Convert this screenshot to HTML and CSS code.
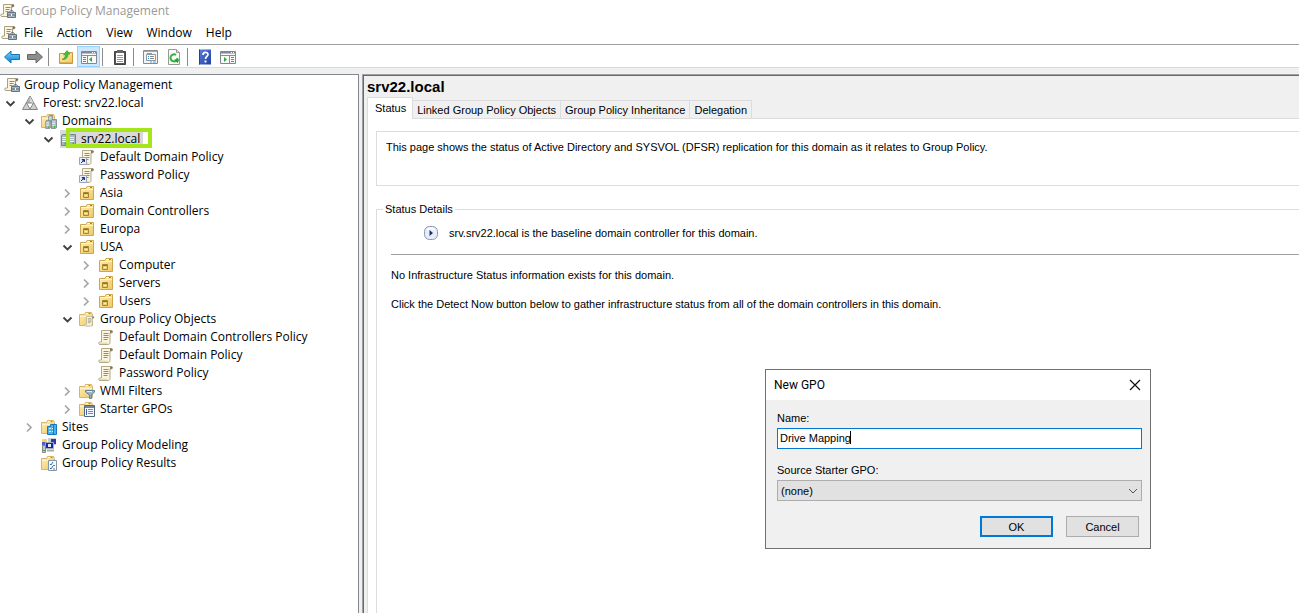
FILE: index.html
```html
<!DOCTYPE html>
<html lang="en">
<head>
<meta charset="utf-8">
<title>Group Policy Management</title>
<link rel="stylesheet" href="styles.css">
</head>
<body>
<svg class="sprite" aria-hidden="true">
  <defs>
    <linearGradient id="gold" x1="0" y1="0" x2="1" y2="1"><stop offset="0" stop-color="#fff0b4"/><stop offset="1" stop-color="#efc764"/></linearGradient>
    <linearGradient id="blue" x1="0" y1="0" x2="0" y2="1"><stop offset="0" stop-color="#7fd4fb"/><stop offset="1" stop-color="#087fcf"/></linearGradient>
    <linearGradient id="help" x1="0" y1="0" x2="1" y2="1"><stop offset="0" stop-color="#5c80dd"/><stop offset="1" stop-color="#1f3fa4"/></linearGradient>
  </defs>
  <symbol id="scroll" viewBox="0 0 16 16">
    <path d="M3.500 1.500h10c1.500 0 1.500 2.500 0 2.500h-1.500v9.500c0 1.200-.8 2-2 2H2c-1.800 0-1.800-2.500 0-2.500h1.500z" fill="#fbf5df" stroke="#b3a987"/>
    <path d="M12 4V2.500c0-1.300 2.500-1.300 2.500 0S13 4 12 4z" fill="#847452"/>
    <path d="M2 13.500h7.500v1.500H2z" fill="#e8dcb4"/>
    <path d="M5.500 4.500h5M5.500 6.500h5M5.500 8.500h5M5.500 10.500h4" stroke="#8c8c88"/>
  </symbol>
  <symbol id="gpm" viewBox="0 0 16 16">
    <path d="M3.500 1.500h9c2 0 2 2.500 0 2.500h-1v9.500H2c-1.800 0-1.800-2.500 0-2.500h1.500z" fill="#fbf5df" stroke="#aaa084"/>
    <path d="M11.500 4V2.500c0-1.300 2.500-1.300 2.500 0S12.500 4 11.500 4z" fill="#7b6c4d"/>
    <path d="M5.500 4.500h5M5.500 6.500h4M5.500 8.500h3" stroke="#8c8c88"/>
    <path d="M9.500 10c0-3.500 4-3.500 4 0" fill="none" stroke="#59636d"/>
    <path d="M7.500 9.500h8v5h-8z" fill="#a9bac6" stroke="#63737f"/>
    <path d="M8 12h7" stroke="#566672"/><path d="M11 11h1v2h-1z" fill="#fff"/>
  </symbol>
  <symbol id="shortcut" viewBox="0 0 16 16">
    <use href="#scroll" width="16" height="16"/>
    <path d="M.5 8.500h7v7h-7z" fill="#e9edf8" stroke="#9aa4c8"/>
    <path d="M2 14l3-3M3 10.500h2.500V13z" stroke="#27327c" fill="#27327c"/>
  </symbol>
  <symbol id="folder" viewBox="0 0 16 16">
    <path d="M.5 3.500h5l1-2h6l1 2v11H.5z" fill="url(#gold)" stroke="#d8b566"/>
    <path d="M7 2.500h5" stroke="#fff"/><path d="M9.500 2.500h2" stroke="#4b90d0"/><path d="M1 5.500h12" stroke="#fff4cb"/>
  </symbol>
  <symbol id="ou" viewBox="0 0 16 16">
    <path d="M1.500 3.500h5.500l1-2h6.500v13h-13z" fill="url(#gold)" stroke="#cda650"/>
    <path d="M8.500 2.500h5" stroke="#fff"/><path d="M11 2.500h2" stroke="#3f8fd8"/>
    <path d="M2 4.500h12" stroke="#fff4cb"/>
    <path d="M4.500 7.500h5v5h-5z" fill="#e9cf75" stroke="#a58634"/><path d="M5 8.500h4" stroke="#8a7230"/><path d="M6 10.500h2" stroke="#fff3b8"/>
  </symbol>
  <symbol id="forest" viewBox="0 0 16 16">
    <path d="M8 1L15.500 14.500H.5z" fill="#cfcfcf" stroke="#858585"/>
    <path d="M8 1.500L4.500 8h7z" fill="#b4b4b4"/><path d="M4.500 8h7L8 14z" fill="#fff" stroke="#858585"/>
    <path d="M8 2l3.500 6L8 7z" fill="#dcdcdc"/>
  </symbol>
  <symbol id="tower" viewBox="0 0 7 12">
    <path d="M.5 1.500l1-1h5v10l-1 1h-5z" fill="#a7b6be" stroke="#74858f"/>
    <path d="M1 3.500h4M1 5.500h4M1 7.500h4" stroke="#e9f1f4"/><path d="M3.500 8.500h1.500v2H3.500z" fill="#35b44a"/>
  </symbol>
  <symbol id="domains" viewBox="0 0 16 16">
    <use href="#folder" width="16" height="16"/>
    <use href="#tower" x="7" y="2" width="5" height="8"/><use href="#tower" x="4" y="7" width="6" height="9"/><use href="#tower" x="10" y="6" width="6" height="10"/>
  </symbol>
  <symbol id="domain" viewBox="0 0 16 16">
    <use href="#tower" x="1" y="3" width="7" height="12"/><use href="#tower" x="9" y="3" width="7" height="12"/>
  </symbol>
  <symbol id="gpos" viewBox="0 0 16 16">
    <use href="#folder" width="16" height="16"/><use href="#scroll" x="5" y="4" width="11" height="12"/>
  </symbol>
  <symbol id="wmi" viewBox="0 0 16 16">
    <use href="#folder" width="16" height="16"/>
    <path d="M6.500 7.500h9v1.500L12.500 12v3.500h-2V12l-4-3z" fill="#9bb3c6" stroke="#65829a"/><path d="M8 8.500h5" stroke="#e0edf5"/>
  </symbol>
  <symbol id="starter" viewBox="0 0 16 16">
    <use href="#folder" width="16" height="16"/>
    <path d="M5.500 4.500h10v11h-10z" fill="#f5f8fc" stroke="#56667b"/><path d="M6 5h9v2H6z" fill="#7184a2"/>
    <path d="M9 8.500h5M9 10.500h5M9 12.500h5" stroke="#6b8fc0"/><path d="M7.500 8v6" stroke="#3768a8"/>
  </symbol>
  <symbol id="sites" viewBox="0 0 16 16">
    <use href="#folder" width="16" height="16"/>
    <path d="M6.500 7.500h3v-2h6v10h-9z" fill="#4ab1ed" stroke="#1978bd"/>
    <path d="M8 9.500h6M8 12.500h6" stroke="#dff4ff" stroke-dasharray="2 1"/><path d="M12.500 6v9" stroke="#1978bd"/>
  </symbol>
  <symbol id="modeling" viewBox="0 0 16 16">
    <path d="M1 2h5v5H1z" fill="#f5d46e"/><path d="M7 1h8v7H7z" fill="#c9ced5"/><path d="M10 2h5v5h-5z" fill="#303aab"/>
    <path d="M1 5h6v5H1z" fill="#5360b8"/><path d="M4.500 5.500h8v6h-8z" fill="#1727b7" stroke="#a9adb8"/>
    <path d="M7 7h3v3H7z" fill="#e5ebff"/><path d="M1.500 8.500h3v7h-3z" fill="#c3c5c9" stroke="#888"/><path d="M6 13.500h7" stroke="#aaa" stroke-width="2"/><path d="M2 13h2v1H2z" fill="#3cae45"/>
  </symbol>
  <symbol id="results" viewBox="0 0 16 16">
    <use href="#folder" width="16" height="16"/>
    <path d="M7.500 5.500h8v10h-8z" fill="#f4f8fb" stroke="#8793a0"/><path d="M9 9l1 1 2-3M9 13l1 1 2-3" fill="none" stroke="#2871b8"/><path d="M12 10.500h2M12 14h2" stroke="#777"/>
  </symbol>
  <symbol id="open" viewBox="0 0 16 16"><path d="M6 4.500L10 8.500 6 12.500" fill="none" stroke="#a6a6a6" stroke-width="1.700"/></symbol>
  <symbol id="close" viewBox="0 0 16 16"><path d="M4.500 6.500l4 4 4-4" fill="none" stroke="#404040" stroke-width="1.800"/></symbol>
</svg>

<header>
  <div class="titlebar"><svg class="icon"><use href="#gpm"/></svg><span>Group Policy Management</span></div>
  <nav class="menubar">
    <svg class="icon"><use href="#gpm"/></svg>
    <button>File</button><button>Action</button><button>View</button><button>Window</button><button>Help</button>
  </nav>
  <div class="toolbar">
    <button aria-label="Back"><svg class="icon" viewBox="0 0 16 16"><path d="M.5 8L7 2v3.500h8.500v5H7V14z" fill="url(#blue)" stroke="#1775b3"/></svg></button>
    <button aria-label="Forward"><svg class="icon" viewBox="0 0 16 16"><path d="M15.500 8L9 2v3.500H.5v5H9V14z" fill="#8d8d8d" stroke="#666"/></svg></button>
    <i class="sep"></i>
    <button aria-label="Up one level"><svg class="icon" viewBox="0 0 16 16"><path d="M1.500 4.500h5l1-1h7v11h-13z" fill="url(#gold)" stroke="#c59b42"/><path d="M2 13.500h12" stroke="#ddb150"/><path d="M4 10.500c2.500-1 3.500-3 3.500-5L5.500 6 9 1.500 12 5l-2 .3c0 4-3 5.700-6 5.200z" fill="#44be33" stroke="#2c8d24" stroke-width=".5"/></svg></button>
    <button class="on" aria-label="Show console tree" aria-pressed="true"><svg class="icon" viewBox="0 0 16 16"><path d="M.5 2.500h15v12H.5z" fill="#fafafa" stroke="#808894"/><path d="M1 3.500h14" stroke="#808894" stroke-width="2"/><path d="M11 3.500h3" stroke="#fff" stroke-dasharray="1 1"/><path d="M1 6.500h14M6.500 6v8" stroke="#858d98"/><path d="M2 8.500h3M2 10.500h3M2 12.500h3" stroke="#4b86c5"/><path d="M11 8v5L8 10.500z" fill="#2eaa3c"/></svg></button>
    <i class="sep"></i>
    <button aria-label="Clipboard"><svg class="icon" viewBox="0 0 16 16"><path d="M2.500 2.500h11v13h-11z" fill="#555" stroke="#444"/><path d="M4 4h8v10H4z" fill="#fff"/><path d="M5 1h6v3H5z" fill="#666"/><path d="M5 6.500h6M5 8.500h6M5 10.500h6M5 12.500h6" stroke="#999"/></svg></button>
    <i class="sep"></i>
    <button aria-label="Properties"><svg class="icon" viewBox="0 0 16 16"><path d="M.5 1.500h14v13H.5z" fill="#f4f4f4" stroke="#8a8a8a"/><path d="M1 2.500h13" stroke="#aaa"/><path d="M3.500 5.500h9v6h-9z" fill="#fff" stroke="#8d99a5"/><path d="M4 4.500h5" stroke="#8d99a5"/><path d="M5 7.500h1M5 9.500h1" stroke="#2d8dd8"/><path d="M7 7.500h4M7 9.500h4" stroke="#888"/><path d="M7 13h2M10 13h3" stroke="#55a5db"/></svg></button>
    <button aria-label="Refresh"><svg class="icon" viewBox="0 0 16 16"><path d="M2.500 .5h8l3 3v12h-11z" fill="#fafafa" stroke="#999"/><path d="M10.500 .5v3h3" fill="#ddd" stroke="#999"/><path d="M11.500 9a3.500 3.500 0 1 1-1.500-3" fill="none" stroke="#35b43c" stroke-width="2"/><path d="M8 10.500h5.500L11.500 14z" fill="#279d30"/></svg></button>
    <i class="sep"></i>
    <button aria-label="Help"><svg class="icon" viewBox="0 0 16 16"><path d="M2 .5h12v15H2z" fill="url(#help)"/><path d="M2.500 .5v15" stroke="#263f8e"/><path d="M6 6c0-3.500 5-3.500 5-.5 0 2-2.500 2-2.500 4.500" fill="none" stroke="#fff" stroke-width="1.700"/><path d="M7.500 11.500h2v2h-2z" fill="#fff"/></svg></button>
    <button aria-label="Show action pane"><svg class="icon" viewBox="0 0 16 16"><path d="M.5 2.500h15v12H.5z" fill="#fafafa" stroke="#808894"/><path d="M1 3.500h14" stroke="#808894" stroke-width="2"/><path d="M11 3.500h3" stroke="#fff" stroke-dasharray="1 1"/><path d="M1 6.500h14M9.500 6v8" stroke="#858d98"/><path d="M11 8.500h3M11 10.500h3M11 12.500h3" stroke="#4b86c5"/><path d="M4 8v5l3-2.500z" fill="#2eaa3c"/></svg></button>
  </div>
</header>

<main class="workspace">
  <nav class="tree" aria-label="Console tree">
    <div class="row root"><svg class="icon"><use href="#gpm"/></svg><span>Group Policy Management</span></div>
    <ul>
      <li>
        <div class="row"><button aria-label="Collapse"><svg class="icon"><use href="#close"/></svg></button><svg class="icon"><use href="#forest"/></svg><span>Forest: srv22.local</span></div>
        <ul>
          <li>
            <div class="row"><button aria-label="Collapse"><svg class="icon"><use href="#close"/></svg></button><svg class="icon"><use href="#domains"/></svg><span>Domains</span></div>
            <ul>
              <li>
                <div class="row selected"><button aria-label="Collapse"><svg class="icon"><use href="#close"/></svg></button><svg class="icon"><use href="#domain"/></svg><span>srv22.local</span><i class="marker"></i></div>
                <ul>
                  <li><div class="row leaf"><svg class="icon"><use href="#shortcut"/></svg><span>Default Domain Policy</span></div></li>
                  <li><div class="row leaf"><svg class="icon"><use href="#shortcut"/></svg><span>Password Policy</span></div></li>
                  <li><div class="row"><button aria-label="Expand"><svg class="icon"><use href="#open"/></svg></button><svg class="icon"><use href="#ou"/></svg><span>Asia</span></div></li>
                  <li><div class="row"><button aria-label="Expand"><svg class="icon"><use href="#open"/></svg></button><svg class="icon"><use href="#ou"/></svg><span>Domain Controllers</span></div></li>
                  <li><div class="row"><button aria-label="Expand"><svg class="icon"><use href="#open"/></svg></button><svg class="icon"><use href="#ou"/></svg><span>Europa</span></div></li>
                  <li>
                    <div class="row"><button aria-label="Collapse"><svg class="icon"><use href="#close"/></svg></button><svg class="icon"><use href="#ou"/></svg><span>USA</span></div>
                    <ul>
                      <li><div class="row"><button aria-label="Expand"><svg class="icon"><use href="#open"/></svg></button><svg class="icon"><use href="#ou"/></svg><span>Computer</span></div></li>
                      <li><div class="row"><button aria-label="Expand"><svg class="icon"><use href="#open"/></svg></button><svg class="icon"><use href="#ou"/></svg><span>Servers</span></div></li>
                      <li><div class="row"><button aria-label="Expand"><svg class="icon"><use href="#open"/></svg></button><svg class="icon"><use href="#ou"/></svg><span>Users</span></div></li>
                    </ul>
                  </li>
                  <li>
                    <div class="row"><button aria-label="Collapse"><svg class="icon"><use href="#close"/></svg></button><svg class="icon"><use href="#gpos"/></svg><span>Group Policy Objects</span></div>
                    <ul>
                      <li><div class="row leaf"><svg class="icon"><use href="#scroll"/></svg><span>Default Domain Controllers Policy</span></div></li>
                      <li><div class="row leaf"><svg class="icon"><use href="#scroll"/></svg><span>Default Domain Policy</span></div></li>
                      <li><div class="row leaf"><svg class="icon"><use href="#scroll"/></svg><span>Password Policy</span></div></li>
                    </ul>
                  </li>
                  <li><div class="row"><button aria-label="Expand"><svg class="icon"><use href="#open"/></svg></button><svg class="icon"><use href="#wmi"/></svg><span>WMI Filters</span></div></li>
                  <li><div class="row"><button aria-label="Expand"><svg class="icon"><use href="#open"/></svg></button><svg class="icon"><use href="#starter"/></svg><span>Starter GPOs</span></div></li>
                </ul>
              </li>
            </ul>
          </li>
          <li><div class="row"><button aria-label="Expand"><svg class="icon"><use href="#open"/></svg></button><svg class="icon"><use href="#sites"/></svg><span>Sites</span></div></li>
          <li><div class="row leaf"><svg class="icon"><use href="#modeling"/></svg><span>Group Policy Modeling</span></div></li>
          <li><div class="row leaf"><svg class="icon"><use href="#results"/></svg><span>Group Policy Results</span></div></li>
        </ul>
      </li>
    </ul>
  </nav>

  <section class="details">
    <h1>srv22.local</h1>
    <div class="tabs" role="tablist">
      <button role="tab" class="active" aria-selected="true">Status</button><button role="tab">Linked Group Policy Objects</button><button role="tab">Group Policy Inheritance</button><button role="tab">Delegation</button>
    </div>
    <div class="page">
      <p class="intro">This page shows the status of Active Directory and SYSVOL (DFSR) replication for this domain as it relates to Group Policy.</p>
      <fieldset>
        <legend>Status Details</legend>
        <div class="baseline">
          <svg class="icon" viewBox="0 0 16 16"><rect x="1.500" y="1.500" width="13" height="13" rx="5" fill="#e6edf8" stroke="#8b97b8"/><path d="M4 5c2-2 6-2 8 0" stroke="#fff" fill="none" stroke-width="2"/><path d="M6.500 5v6L10 8z" fill="#1c2f72"/></svg>
          <span>srv.srv22.local is the baseline domain controller for this domain.</span>
        </div>
        <hr>
        <p>No Infrastructure Status information exists for this domain.</p>
        <p>Click the Detect Now button below to gather infrastructure status from all of the domain controllers in this domain.</p>
      </fieldset>
    </div>
  </section>
</main>

<form class="dialog" role="dialog" aria-labelledby="dialog-title">
  <div class="dialog-head"><span id="dialog-title">New GPO</span>
    <button type="button" aria-label="Close"><svg class="icon" viewBox="0 0 16 16"><path d="M3 3l10 10M13 3L3 13" stroke="#111" stroke-width="1.200"/></svg></button></div>
  <div class="dialog-body">
    <label for="name">Name:</label>
    <div class="field"><input id="name" type="text" value="Drive Mapping"><i class="caret"></i></div>
    <label for="source">Source Starter GPO:</label>
    <div class="field"><select id="source"><option>(none)</option></select><svg class="arrow" viewBox="0 0 10 6"><path d="M1 1l4 4 4-4" fill="none" stroke="#555"/></svg></div>
    <div class="actions"><button type="button" class="default">OK</button><button type="button">Cancel</button></div>
  </div>
</form>
</body>
</html>
```
FILE: styles.css
```css
* { box-sizing: border-box; }

body {
  margin: 0;
  min-height: 100vh;
  display: flex;
  flex-direction: column;
  position: relative;
  overflow: hidden;
  background: #f0f0f0;
  color: #000;
  font: 12px/18px "Open Sans", "Noto Sans", sans-serif;
}

button { font: inherit; color: inherit; padding: 0; border: 0; background: none; }
ul { list-style: none; margin: 0; padding: 0; }
.sprite { position: absolute; width: 0; height: 0; }
.icon { display: block; flex: none; width: 16px; height: 16px; }

.titlebar, .menubar { display: flex; align-items: center; height: 22px; background: #fff; }
.titlebar { gap: 5px; color: #999; }
.menubar { padding-left: 1px; }
.menubar button { padding: 0 7px; line-height: 22px; }

.toolbar {
  display: flex;
  align-items: center;
  height: 24px;
  padding-top: 1px;
  background: #fff;
  border-top: 1px solid #a0a0a0;
  border-bottom: 1px solid #d9d9d9;
}
.toolbar button { width: 23px; height: 21px; display: grid; place-items: center; }
.toolbar .on { background: #cce8ff; border: 1px solid #99d1ff; }
.sep { width: 1px; height: 18px; margin: 0 5px 0 2px; background: #8a8a8a; }

.workspace { flex: 1; display: flex; gap: 3px; padding-top: 6px; }
.tree {
  flex: 0 0 359px;
  padding-top: 1px;
  background: #fff;
  border-top: 1px solid #828790;
  border-right: 1px solid #828790;
  white-space: nowrap;
}
.tree ul ul { padding-left: 19px; }
.row { display: flex; align-items: center; gap: 4px; height: 18px; padding-left: 2px; position: relative; }
.row button { width: 16px; height: 16px; }
.row span { padding-left: 1px; }
.root { padding-left: 4px; }
.root span { padding-left: 0; }
.leaf { padding-left: 22px; }
.selected span { background: #d9d9d9; margin-left: -4px; padding: 0 3px 0 5px; }
.selected > .icon { height: 18px; padding: 1px 0; background: #d9d9d9; }
.marker { position: absolute; left: 28px; top: -2px; width: 86px; height: 20px; border: 4px solid #a5e61b; }

.details {
  flex: 1;
  min-width: 0;
  display: flex;
  flex-direction: column;
  padding-left: 3px;
  border: solid #696969;
  border-width: 1px 0 0 1px;
  outline: 1px solid #a0a0a0;
  margin: 1px 0 0 1px;
  font: 11px/16px "Liberation Sans", Arial, sans-serif;
}
h1 { margin: 0; font-size: 15px; line-height: 22px; }
.tabs { position: relative; display: flex; align-items: flex-end; height: 20px; }
.tabs button { height: 18px; padding: 0 4px; border: 1px solid #dcdcdc; border-left: 0; border-bottom: 0; }
.tabs .active { height: 22px; margin-bottom: -1px; padding: 0 6px 2px 7px; border-left: 1px solid #dcdcdc; background: #fff; }
.page { flex: 1; padding: 12px 0 0 8px; background: #fff; border: 1px solid #dcdcdc; border-width: 1px 0 0 1px; }
.intro { height: 55px; margin: 0; padding: 7px 9px; border: 1px solid #dcdcdc; border-right: 0; }
fieldset { margin: 15px 0 0; min-height: 420px; padding: 8px 0 0 14px; border: 1px solid #dcdcdc; border-right: 0; }
legend { margin-left: -8px; padding: 0 2px; }
.baseline { display: flex; align-items: center; gap: 10px; padding-left: 32px; }
hr { height: 1px; margin: 13px 0 12px; border: 0; background: #a0a0a0; }
fieldset p { margin: 0 0 13px; }

.dialog {
  position: absolute;
  left: 765px;
  top: 369px;
  width: 386px;
  background: #f0f0f0;
  border: 1px solid #707070;
  font: 11px/16px "Liberation Sans", Arial, sans-serif;
}
.dialog-head { display: flex; align-items: center; justify-content: space-between; height: 30px; padding: 0 7px 0 8px; background: #fff; font: 12px/18px Roboto, sans-serif; }
.dialog-body { padding: 10px 8px 11px 11px; }
label { display: block; height: 18px; }
.field { position: relative; margin-bottom: 13px; }
input, select { display: block; width: 100%; height: 21px; border: 1px solid #adadad; border-radius: 0; font: inherit; color: #000; }
input { padding: 0 2px 2px; background: #fff; border-color: #0078d7; outline: 0; }
select { padding: 0 3px; appearance: none; background: #e1e1e1; }
.caret { position: absolute; left: 73px; top: 3px; width: 1px; height: 13px; background: #000; }
.arrow { position: absolute; right: 4px; top: 8px; width: 10px; height: 6px; }
.actions { display: flex; justify-content: flex-end; gap: 13px; padding: 2px 3px 0 0; }
.actions button { width: 73px; height: 21px; background: #e1e1e1; border: 1px solid #adadad; }
.actions .default { border: 2px solid #0078d7; }
```
